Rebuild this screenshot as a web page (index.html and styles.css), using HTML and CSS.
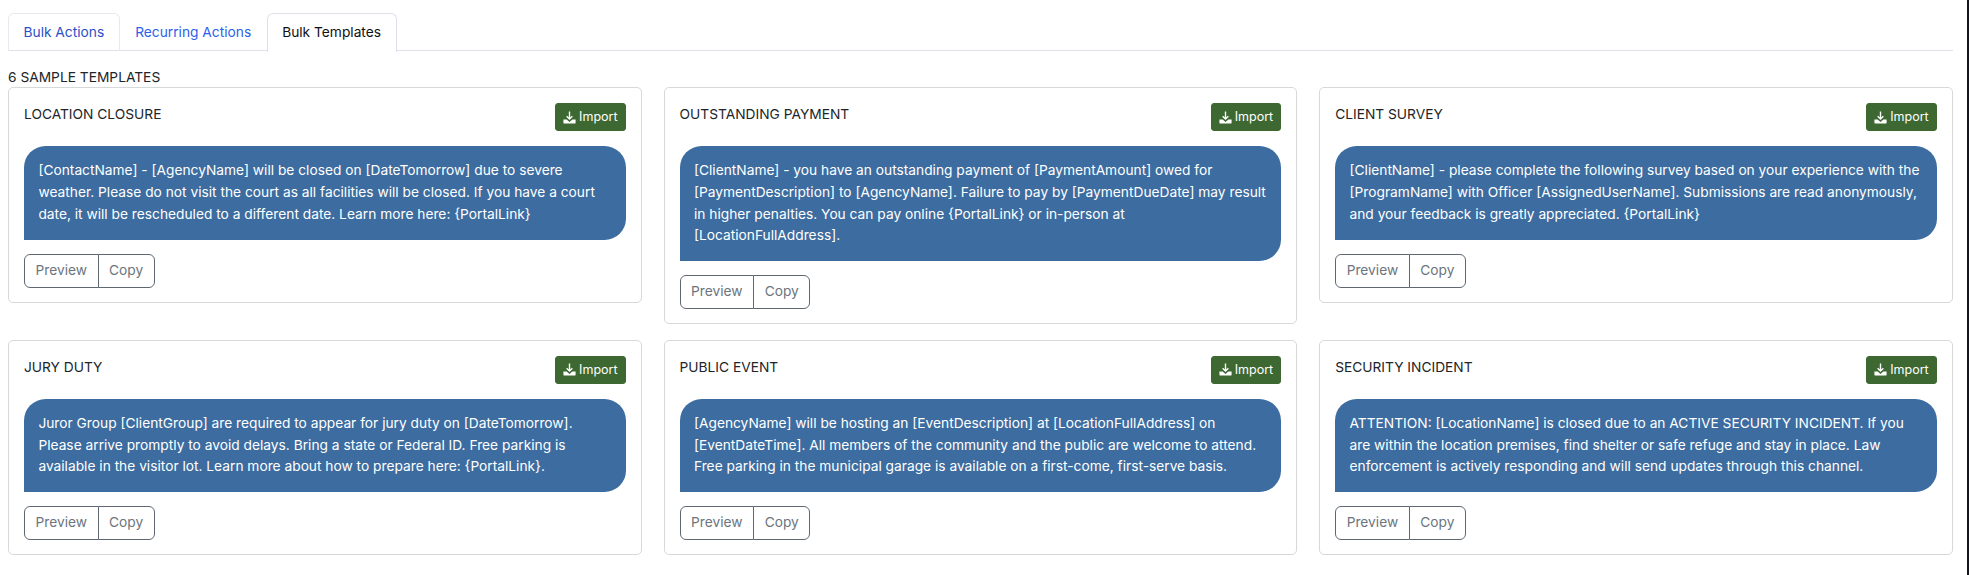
FILE: index.html
```html
<!DOCTYPE html>
<html lang="en">
<head>
<meta charset="utf-8">
<title>Bulk Templates</title>
<link rel="stylesheet" href="styles.css">
</head>
<body>
<ul class="tabs">
  <li class="tab first"><a href="#">Bulk Actions</a></li>
  <li class="tab second"><a href="#">Recurring Actions</a></li>
  <li class="tab active"><a href="#">Bulk Templates</a></li>
</ul>
<div class="count">6 SAMPLE TEMPLATES</div>
<div class="grid">
  <section class="card">
    <header class="card-head"><h3 class="title">LOCATION CLOSURE</h3><button class="import"><svg class="icon" viewBox="0 0 16 16"><path d="M8 .5v9.500M4.500 6.500 8 10l3.500-3.500"/><path class="fill" d="M.5 10.500h4L8 13.500l3.500-3h4v3.500a1.500 1.500 0 0 1-1.500 1.500H2A1.500 1.500 0 0 1 .5 14z"/></svg>Import</button></header>
    <p class="bubble">[ContactName] - [AgencyName] will be closed on [DateTomorrow] due to severe weather. Please do not visit the court as all facilities will be closed. If you have a court date, it will be rescheduled to a different date. Learn more here: {PortalLink}</p>
    <div class="group"><button>Preview</button><button>Copy</button></div>
  </section>
  <section class="card">
    <header class="card-head"><h3 class="title">OUTSTANDING PAYMENT</h3><button class="import"><svg class="icon" viewBox="0 0 16 16"><path d="M8 .5v9.500M4.500 6.500 8 10l3.500-3.500"/><path class="fill" d="M.5 10.500h4L8 13.500l3.500-3h4v3.500a1.500 1.500 0 0 1-1.500 1.500H2A1.500 1.500 0 0 1 .5 14z"/></svg>Import</button></header>
    <p class="bubble">[ClientName] - you have an outstanding payment of [PaymentAmount] owed for [PaymentDescription] to [AgencyName]. Failure to pay by [PaymentDueDate] may result in higher penalties. You can pay online {PortalLink} or in-person at [LocationFullAddress].</p>
    <div class="group"><button>Preview</button><button>Copy</button></div>
  </section>
  <section class="card">
    <header class="card-head"><h3 class="title">CLIENT SURVEY</h3><button class="import"><svg class="icon" viewBox="0 0 16 16"><path d="M8 .5v9.500M4.500 6.500 8 10l3.500-3.500"/><path class="fill" d="M.5 10.500h4L8 13.500l3.500-3h4v3.500a1.500 1.500 0 0 1-1.500 1.500H2A1.500 1.500 0 0 1 .5 14z"/></svg>Import</button></header>
    <p class="bubble">[ClientName] - please complete the following survey based on your experience with the [ProgramName] with Officer [AssignedUserName]. Submissions are read anonymously, and your feedback is greatly appreciated. {PortalLink}</p>
    <div class="group"><button>Preview</button><button>Copy</button></div>
  </section>
  <section class="card">
    <header class="card-head"><h3 class="title">JURY DUTY</h3><button class="import"><svg class="icon" viewBox="0 0 16 16"><path d="M8 .5v9.500M4.500 6.500 8 10l3.500-3.500"/><path class="fill" d="M.5 10.500h4L8 13.500l3.500-3h4v3.500a1.500 1.500 0 0 1-1.500 1.500H2A1.500 1.500 0 0 1 .5 14z"/></svg>Import</button></header>
    <p class="bubble">Juror Group [ClientGroup] are required to appear for jury duty on [DateTomorrow]. Please arrive promptly to avoid delays. Bring a state or Federal ID. Free parking is available in the visitor lot. Learn more about how to prepare here: {PortalLink}.</p>
    <div class="group"><button>Preview</button><button>Copy</button></div>
  </section>
  <section class="card">
    <header class="card-head"><h3 class="title">PUBLIC EVENT</h3><button class="import"><svg class="icon" viewBox="0 0 16 16"><path d="M8 .5v9.500M4.500 6.500 8 10l3.500-3.500"/><path class="fill" d="M.5 10.500h4L8 13.500l3.500-3h4v3.500a1.500 1.500 0 0 1-1.500 1.500H2A1.500 1.500 0 0 1 .5 14z"/></svg>Import</button></header>
    <p class="bubble">[AgencyName] will be hosting an [EventDescription] at [LocationFullAddress] on [EventDateTime]. All members of the community and the public are welcome to attend. Free parking in the municipal garage is available on a first-come, first-serve basis.</p>
    <div class="group"><button>Preview</button><button>Copy</button></div>
  </section>
  <section class="card">
    <header class="card-head"><h3 class="title">SECURITY INCIDENT</h3><button class="import"><svg class="icon" viewBox="0 0 16 16"><path d="M8 .5v9.500M4.500 6.500 8 10l3.500-3.500"/><path class="fill" d="M.5 10.500h4L8 13.500l3.500-3h4v3.500a1.500 1.500 0 0 1-1.500 1.500H2A1.500 1.500 0 0 1 .5 14z"/></svg>Import</button></header>
    <p class="bubble">ATTENTION: [LocationName] is closed due to an ACTIVE SECURITY INCIDENT. If you are within the location premises, find shelter or safe refuge and stay in place. Law enforcement is actively responding and will send updates through this channel.</p>
    <div class="group"><button>Preview</button><button>Copy</button></div>
  </section>
</div>
</body>
</html>
```
FILE: styles.css
```css
* { box-sizing: border-box; }
html, body { margin: 0; background: #fff; }
body {
  padding: 13px 16.300px 0 8px;
  font-family: Inter, "Liberation Sans", sans-serif;
  font-size: 13.750px;
  line-height: 21px;
  color: #212529;
}
body::after {
  content: "";
  position: fixed;
  top: 0;
  right: 0;
  bottom: 0;
  width: 2px;
  background: #15151f;
}
.tabs {
  display: flex;
  margin: 0 0 16px;
  padding: 0;
  list-style: none;
  border-bottom: 1px solid #dfe1ea;
  height: 38px;
}
.tab {
  height: 38px;
  border: 1px solid #e8e9ee;
  border-bottom: 0;
  border-radius: 6px 6px 0 0;
  padding: 8px 14.500px 0;
}
.tab a { text-decoration: none; }
.first a { color: #2b50c6; }
.second { border-color: transparent; }
.second a { color: #2b62ea; }
.active { border-color: #dfe1ea; background: #fff; height: 39px; }
.active a { color: #111; }
.count { height: 20px; line-height: 20px; }
.grid {
  display: grid;
  grid-template-columns: repeat(3, 1fr);
  gap: 15.600px 22px;
  align-items: start;
}
.card {
  border: 1px solid #d6d8da;
  border-radius: 5px;
  padding: 15px 15px 14px;
}
.card-head {
  display: flex;
  justify-content: space-between;
  align-items: flex-start;
  margin-bottom: 15px;
}
.title { margin: 0; padding-top: 1px; font-size: 13.750px; font-weight: 400; line-height: 21px; color: #212529; }
.import {
  display: flex;
  align-items: center;
  gap: 3px;
  height: 28px;
  padding: 0 7px;
  border: 1px solid #3d6832;
  border-radius: 3px;
  background: #3d6832;
  color: #fff;
  font: 12.500px/1 Inter, "Liberation Sans", sans-serif;
}
.icon { width: 13px; height: 13px; fill: none; stroke: #fff; stroke-width: 1.700; }
.icon .fill { fill: #fff; stroke: none; }
.bubble {
  margin: 0 0 14px;
  padding: 14.400px;
  background: #3c6ca0;
  color: #fff;
  font-size: 13.750px;
  line-height: 21.600px;
  border-radius: 21.600px 21.600px 21.600px 0;
}
.group { display: inline-flex; vertical-align: top; }
.group button {
  height: 34px;
  padding: 0 10.500px;
  background: #fff;
  color: #6c757d;
  border: 1px solid #5f6872;
  font: 13.750px/1 Inter, "Liberation Sans", sans-serif;
}
.group button:first-child { border-radius: 6px 0 0 6px; }
.group button:last-child { border-radius: 0 6px 6px 0; margin-left: -1px; }
```
